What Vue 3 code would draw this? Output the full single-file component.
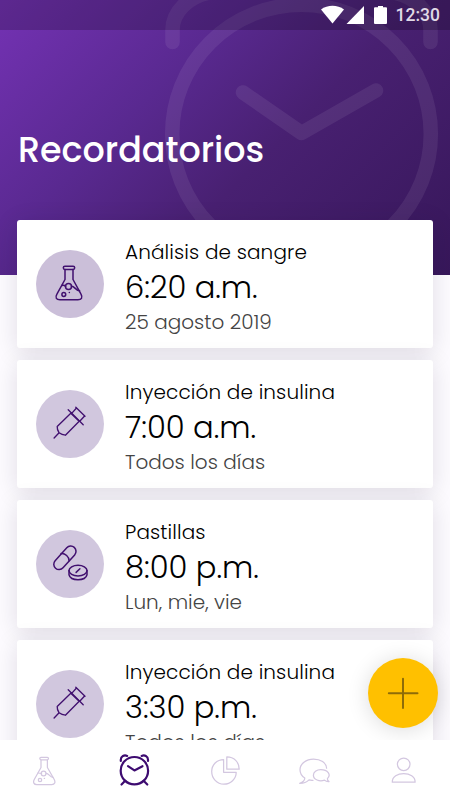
<template>
  <div class="app">
    <header class="hero">
      <svg class="hero-clock" viewBox="0 0 450 275" fill="none">
        <circle cx="301.5" cy="134" r="129.3" />
        <path d="M243 92.5L301.5 133L376 90.5" />
        <path d="M172.5 42V30C172.5 12 188 -4 212 -8" />
        <path d="M430.5 42V30C430.5 12 415 -4 391 -8" />
      </svg>
      <div class="status-bar">
        <svg class="status-icons" viewBox="0 0 68 20">
          <path d="M0 4.6C6.5-.4 16.5-.4 23 4.6L11.5 18.5Z" />
          <path d="M25.5 19L43 1V19Z" />
          <path d="M54 2.2h3V1h5v1.2h3q1 0 1 1V18q0 1-1 1H54q-1 0-1-1V3.2q0-1 1-1Z" />
        </svg>
        <span class="status-time">12:30</span>
      </div>
      <h1 class="hero-title">Recordatorios</h1>
    </header>

    <main class="list">
      <article v-for="(item, i) in reminders" :key="i" class="card">
        <div class="card-icon" :class="`card-icon-${item.icon}`">
          <svg viewBox="0 0 40 40" fill="none">
            <g v-if="item.icon === 'flask'">
              <rect x="13.3" y="2.2" width="11.4" height="3.2" rx="1.6" />
              <path d="M15 5.5V15.5L6.9 30.2C4.8 33.8 6.5 35.8 9.9 35.8H27.9C31.3 35.8 33.1 33.8 31 30.2L23 15.5V5.5" />
              <path d="M11.9 21.5C13.7 21 14.9 21.6 15.6 22.5M21.5 22.3C24.5 21.8 25.3 26.5 29.6 26.8" />
              <circle cx="18.5" cy="22.5" r="3" />
              <circle cx="13.8" cy="30.5" r="1.9" />
              <path d="M19.3 28.5h.1" />
            </g>
            <g v-else-if="item.icon === 'syringe'" class="thin">
              <path d="M4.1 34L9.1 28.8M9.1 28.8C7.5 26.4 7 25 7.2 22.4L20.8 9.2L29.2 17.3L15.4 31.2C13 31 11.1 30.3 9.1 28.8Z" />
              <path d="M18.2 5.8L33.2 20.8M21.7 9.4L26.5 4M29.7 17.2L34.4 12.2M25.8 3.2L35 12.2" />
            </g>
            <g v-else>
              <rect x="-5.3" y="-14" width="10.6" height="28" rx="5.3" transform="translate(14.9 13.8) rotate(42)" />
              <path d="M11.1 9.6C15 9.1 19.3 12.9 19.1 16.8" />
              <ellipse cx="28" cy="26.6" rx="9" ry="5.3" />
              <path d="M19 26.6V30.8C20.7 37.4 35.3 37.4 37 30.8V26.6M26.1 28.4L29.9 24.7" />
            </g>
          </svg>
        </div>
        <div class="card-text">
          <h2 class="card-name">{{ item.name }}</h2>
          <p class="card-time">{{ item.time }}</p>
          <p class="card-date">{{ item.date }}</p>
        </div>
      </article>
    </main>

    <button class="fab" aria-label="Agregar">
      <svg viewBox="0 0 70 70"><path d="M35 20.8V50M20.8 35.3H49.5" /></svg>
    </button>

    <nav class="nav">
      <a class="nav-item">
        <svg viewBox="0 0 40 40" fill="none">
          <rect x="14.8" y="7.4" width="8.7" height="2.4" rx="1.2" />
          <path d="M16 10V17.5L9.4 29.2C7.6 32.4 9 34.6 11.8 34.6H26.8C29.7 34.6 30.8 32.4 29.1 29.2L22.4 17.5V10" />
          <path d="M13.2 23L16.6 23.5M21.2 23.5C23.8 23.3 24.6 27 28 27.4" />
          <circle cx="18.6" cy="23.5" r="2.4" />
          <circle cx="15" cy="30" r="1.7" />
          <path d="M19.3 28.4h.2" />
        </svg>
      </a>
      <a class="nav-item active">
        <svg viewBox="0 0 40 40" fill="none">
          <circle cx="19.4" cy="20.7" r="13.7" />
          <path d="M13 16.2L19.4 20.4L27.5 16.2M10.2 30.8L6.5 34.5M28.6 30.8L32.3 34.5" />
          <path d="M5.8 11V9.8C5.8 6 9.3 4.7 12.2 5.9M33 11V9.8C33 6 29.5 4.7 26.6 5.9" />
        </svg>
      </a>
      <a class="nav-item">
        <svg viewBox="0 0 40 40" fill="none">
          <path d="M18.6 9.5C11.9 9.5 6.7 14.8 6.7 21.5S11.9 34.2 18.8 34.2C25.7 34.2 31.2 29 31.2 22.3H18.6Z" />
          <path d="M21.8 6.9V19.2H34.2C34.2 12 29 6.9 21.8 6.9Z" />
        </svg>
      </a>
      <a class="nav-item">
        <svg viewBox="0 0 40 40" fill="none">
          <path d="M31.6 18.2C31.2 12.8 25.7 9 18.5 9C11.1 9 5 13.9 5 19.7C5 23 6.9 26.2 9.8 28.1C9.8 30.3 7.7 32.3 4.7 33.4C8.8 33.4 11.9 32.2 14 29.9C15.5 30.4 16.5 30.4 18 30.3" />
          <path d="M32.4 28.6C36.5 24.7 32.7 19.7 25.8 19.7C21.5 19.7 18.4 22.2 18.4 25.2C18.4 29.5 24.4 32 29.5 30.1C30.9 31.4 32.3 31.8 34 31.6C32.7 30.7 32.3 29.8 32.4 28.6Z" />
        </svg>
      </a>
      <a class="nav-item">
        <svg viewBox="0 0 40 40" fill="none">
          <circle cx="18.7" cy="14.3" r="6.3" />
          <path d="M7.3 32.2C6.7 20.6 30.7 20.6 30.1 32.2Z" />
        </svg>
      </a>
    </nav>
  </div>
</template>

<script setup>
const reminders = [
  { icon: 'flask',   name: 'Análisis de sangre',    time: '6:20 a.m.', date: '25 agosto 2019' },
  { icon: 'syringe', name: 'Inyección de insulina', time: '7:00 a.m.', date: 'Todos los días' },
  { icon: 'pills',   name: 'Pastillas',             time: '8:00 p.m.', date: 'Lun, mie, vie' },
  { icon: 'syringe', name: 'Inyección de insulina', time: '3:30 p.m.', date: 'Todos los días' },
];
</script>

<style>
body { margin: 0; }
</style>

<style scoped>
.app {
  position: relative;
  display: flex; flex-direction: column;
  height: 800px;
  overflow: hidden;
  background: #fdfbff;
  font-family: Poppins, sans-serif;
  color: #000;
}

.hero {
  position: relative;
  flex: none;
  height: 275px;
  background: linear-gradient(135deg, #7432b4 0%, #592990 34%, #482071 58%, #37175a 100%);
}
.hero-clock {
  position: absolute; inset: 0;
  width: 450px; height: 275px;
  opacity: 0.07;
  stroke: #fff; stroke-width: 14.5;
  stroke-linecap: round; stroke-linejoin: round;
}
.status-bar {
  position: relative;
  display: flex; align-items: center; justify-content: flex-end; gap: 7px;
  height: 30px;
  padding-right: 10px;
  background: rgba(0,0,0,0.2);
}
.status-icons { width: 68px; height: 20px; fill: #fff; }
.status-time {
  font: 500 17.5px/30px Roboto, sans-serif;
  color: #e0d9e6;
}
.hero-title {
  position: relative;
  margin: 97px 0 0 18px;
  font-size: 34.9px; line-height: 46px; font-weight: 500;
  color: #fff;
}

.list {
  position: relative;
  display: flex; flex-direction: column; gap: 12.5px;
  flex: 1;
  margin-top: -55px;
  padding: 0 17px;
}
.card {
  display: flex; align-items: center; gap: 21px;
  flex: none;
  box-sizing: border-box;
  height: 127.5px;
  padding-left: 19px;
  border-radius: 3px;
  background: #fff;
  box-shadow: 0 4px 25px rgba(25,10,45,0.13);
}
.card-icon {
  display: flex; align-items: center; justify-content: center;
  width: 68px; height: 68px;
  border-radius: 50%;
  background: #d1c7de;
}
.card-icon-flask { background: #cbbfd9; }
.card-icon svg {
  width: 40px; height: 40px;
  stroke: #41106f; stroke-width: 1.5;
  stroke-linecap: round; stroke-linejoin: round;
}
.card-icon .thin { stroke-width: 1.35; }
.card-text { padding-top: 7px; }
.card-name, .card-time, .card-date { margin: 0; font-weight: 300; white-space: nowrap; }
.card-name { font-size: 20px; line-height: 30px; letter-spacing: 0.12px; }
.card-time { padding-top: 1px; font-size: 30.6px; line-height: 39px; }
.card-date { font-size: 20px; line-height: 30px; color: #444; }

.fab {
  position: absolute; left: 367.5px; top: 657.5px;
  width: 70px; height: 70px;
  padding: 0;
  border: none; border-radius: 50%;
  background: #ffc000;
  box-shadow: 0 2px 22px rgba(0,0,0,0.14);
}
.fab svg { display: block; stroke: #8e6c08; stroke-width: 2; stroke-linecap: round; }

.nav {
  position: absolute; left: 0; right: 0; bottom: 0;
  display: flex;
  height: 60px;
  background: #fff;
}
.nav-item { display: flex; flex: 1; align-items: center; justify-content: center; }
.nav-item svg {
  width: 40px; height: 40px;
  stroke: #d3c7e0; stroke-width: 1.25;
  stroke-linecap: round; stroke-linejoin: round;
}
.nav-item.active svg { stroke: #3d0b70; stroke-width: 2.2; }
</style>
